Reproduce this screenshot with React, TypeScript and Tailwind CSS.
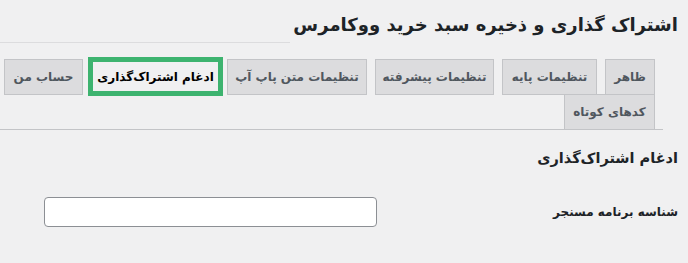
const tabs = [
  { label: "ظاهر", w: "w-[50px]", m: "ml-[8px]" },
  { label: "تنظیمات پایه", w: "w-[95px]", m: "ml-[8px]" },
  { label: "تنظیمات پیشرفته", w: "w-[119px]", m: "ml-[8px]" },
  { label: "تنظیمات متن پاپ آپ", w: "w-[140px]", m: "ml-[4px]" },
  { label: "ادغام اشتراک‌گذاری", w: "w-[135px]", m: "ml-[5px]", active: true },
  { label: "حساب من", w: "w-[79px]", m: "ml-0" },
  { label: "کدهای کوتاه", w: "w-[91px]", m: "ml-[8px]" },
];

const App = () => {
  return (
    <div
      dir="rtl"
      className="h-[263px] w-[688px] overflow-hidden bg-[#f0f0f1] font-['DejaVu_Sans',sans-serif] text-[#1d2327]"
    >
      {/* Page title */}
      <div className="flex items-end pr-[10px] pt-[7px]">
        <h1 className="shrink-0 pl-[3px] text-[18px] font-bold leading-[36px]">
          اشتراک گذاری و ذخیره سبد خرید ووکامرس
        </h1>
        <div className="h-px flex-1 border-b border-dotted border-[#dcdcde] bg-[#dcdcde]" />
      </div>

      {/* Tabs */}
      <nav className="mr-[25px] mt-[16px] flex flex-wrap border-b border-[#c3c4c7] pr-[8px]">
        {tabs.map((tab) =>
          tab.active ? (
            <a
              key={tab.label}
              href="#"
              className={`${tab.w} ${tab.m} -my-[2px] flex h-[39px] items-center justify-center whitespace-nowrap border-[5px] border-[#3db36f] bg-[#f0f0f1] text-[12px] font-bold text-black`}
            >
              {tab.label}
            </a>
          ) : (
            <a
              key={tab.label}
              href="#"
              className={`${tab.w} ${tab.m} -mb-px flex h-[36px] items-center justify-center whitespace-nowrap border border-[#c3c4c7] bg-[#dcdcde] text-[12px] font-bold text-[#50575e]`}
            >
              {tab.label}
            </a>
          ),
        )}
      </nav>

      {/* Section */}
      <h2 className="mt-[16px] pr-[10px] text-[14.5px] font-bold leading-[24px]">
        ادغام اشتراک‌گذاری
      </h2>

      <div className="mt-[27px] flex items-center pr-[10px]">
        <label className="w-[200px] text-[12px] font-bold">شناسه برنامه مسنجر</label>
        <input
          type="text"
          className="mr-[101px] h-[30px] w-[333px] rounded-[4px] border border-[#8c8f94] bg-white px-2 text-[14px] outline-none"
        />
      </div>
    </div>
  );
};

export default App;
